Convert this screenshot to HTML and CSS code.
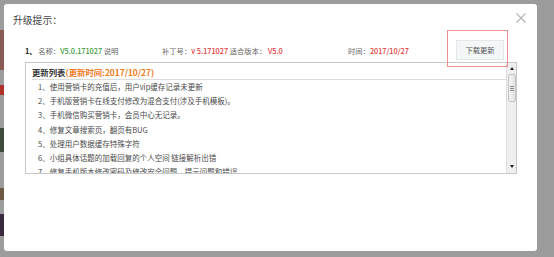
FILE: index.html
```html
<!DOCTYPE html>
<html lang="zh-CN">
<head>
<meta charset="utf-8">
<title>升级提示</title>
<link rel="stylesheet" href="styles.css">
</head>
<body>
<div class="stage">
  <div class="backdrop">
    <span class="bd bd1"></span>
    <span class="bd bd2"></span>
    <span class="bd bd3"></span>
    <span class="bd bd4"></span>
    <span class="bd bd5"></span>
  </div>
  <div class="dialog">
    <div class="dlg-head">
      <span class="dlg-title">升级提示：</span>
      <span class="dlg-close" aria-label="关闭">
        <svg width="10" height="10" viewBox="0 0 10 10"><path d="M0.5 0.5 L9.5 9.5 M9.5 0.5 L0.5 9.5" stroke="#b4b4b4" stroke-width="1.1" fill="none"/></svg>
      </span>
    </div>
    <div class="info-row">
      <span class="cell cell-name"><b class="idx">1、</b> <span class="lbl">名称：</span><span class="green">V5.0.171027</span> <span class="lbl">说明</span></span>
      <span class="cell cell-patch"><span class="lbl">补丁号：</span><span class="red">v 5.171027</span> <span class="lbl">适合版本：</span> <span class="red">V5.0</span></span>
      <span class="cell cell-time"><span class="lbl">时间：</span><span class="red">2017/10/27</span></span>
      <span class="btn-wrap">
        <span class="btn">下载更新</span>
        <span class="mark"></span>
      </span>
    </div>
    <div class="list-box">
      <div class="list-main">
        <div class="list-head"><span class="lh-title">更新列表</span><span class="lh-time">(更新时间:2017/10/27)</span></div>
        <ol class="items">
          <li>1、使用营销卡的充值后，用户vip缓存记录未更新</li>
          <li>2、手机版营销卡在线支付修改为混合支付(涉及手机模板)。</li>
          <li>3、手机微信购买营销卡，会员中心无记录。</li>
          <li>4、修复文章搜索页，翻页有BUG</li>
          <li>5、处理用户数据缓存特殊字符</li>
          <li>6、小组具体话题的加载回复的个人空间 链接解析出错</li>
          <li>7、修复手机版本修改密码及修改安全问题，提示问题和错误</li>
        </ol>
      </div>
      <div class="sbar">
        <span class="sb-up"></span>
        <span class="sb-thumb"><i></i><i></i><i></i></span>
        <span class="sb-space"></span>
        <span class="sb-down"></span>
      </div>
    </div>
  </div>
</div>
</body>
</html>
```
FILE: styles.css
```css
html, body {
  margin: 0;
  padding: 0;
}
body {
  width: 554px;
  height: 257px;
  overflow: hidden;
  background: #9c9c9c;
  font-family: "Noto Sans CJK SC", "Noto Sans", sans-serif;
}
.stage {
  position: relative;
  width: 554px;
  height: 257px;
  padding: 4px 0 0 4px;
  box-sizing: border-box;
}
.backdrop {
  position: absolute;
  left: 0;
  top: 0;
  width: 4px;
  height: 257px;
}
.bd {
  position: absolute;
  left: 0;
  width: 4px;
}
.bd1 { top: 30px; height: 40px; background: #8a5a55; }
.bd2 { top: 85px; height: 10px; background: #b0302a; }
.bd3 { top: 128px; height: 24px; background: #3e4a3a; }
.bd4 { top: 188px; height: 12px; background: #6e5a44; }
.bd5 { top: 214px; height: 22px; background: #3a2a40; }

.dialog {
  position: relative;
  width: 533px;
  height: 247px;
  background: #fff;
  border-radius: 3px;
  display: flex;
  flex-direction: column;
}
.dlg-head {
  height: 36px;
  display: flex;
  align-items: flex-start;
  justify-content: space-between;
  padding: 0 11px 0 9px;
}
.dlg-title {
  margin-top: 9px;
  font-size: 9.8px;
  line-height: 14px;
  color: #444;
}
.dlg-close {
  margin-top: 9px;
  width: 10px;
  height: 10px;
  display: flex;
}
.info-row {
  height: 20px;
  display: flex;
  align-items: center;
  padding-left: 21px;
  font-size: 7.3px;
  color: #666;
  white-space: nowrap;
}
.cell {
  display: block;
  white-space: pre;
  padding-top: 2px;
  line-height: 12px;
}
.cell-name { width: 137px; }
.cell-patch { width: 186px; }
.cell-time { width: 108px; }
.idx {
  color: #222;
  font-weight: bold;
}
.green { color: #3a9a3a; font-weight: 500; }
.red { color: #e23b3b; font-weight: 500; }
.btn-wrap {
  position: relative;
  display: flex;
}
.btn {
  width: 46px;
  height: 18px;
  border: 1px solid #e4e8e8;
  background: #f4f7f7;
  color: #555;
  font-size: 7.3px;
  display: flex;
  align-items: center;
  justify-content: center;
}
.mark {
  position: absolute;
  left: -9px;
  top: -10px;
  width: 59px;
  height: 35px;
  border: 1px solid #ee8e8e;
}
.list-box {
  margin: 2px 0 0 21px;
  width: 492px;
  height: 112px;
  box-sizing: border-box;
  border: 1px solid #c8c8c8;
  display: flex;
  overflow: hidden;
}
.list-main {
  flex: 1;
  overflow: hidden;
}
.list-head {
  margin-left: 6px;
  height: 17px;
  border-bottom: 1px solid #dcdcdc;
  display: flex;
  align-items: center;
  font-size: 8.4px;
  font-weight: bold;
  white-space: nowrap;
  padding-top: 1px;
  box-sizing: border-box;
}
.lh-title { color: #333; }
.lh-time { color: #f07a22; }
.items {
  list-style: none;
  margin: 0;
  padding: 0 0 0 12px;
  font-size: 7.5px;
  line-height: 14.2px;
  color: #4a4a4a;
  white-space: nowrap;
}
.sbar {
  width: 10px;
  background: #efefef;
  border-left: 1px solid #dedede;
  display: flex;
  flex-direction: column;
  align-items: center;
  padding: 4px 0 3px;
  box-sizing: border-box;
}
.sb-up {
  width: 0;
  height: 0;
  border-left: 2.5px solid transparent;
  border-right: 2.5px solid transparent;
  border-bottom: 3px solid #222;
}
.sb-thumb {
  margin-top: 4px;
  width: 8px;
  height: 28px;
  box-sizing: border-box;
  border: 1px solid #c4c4c4;
  border-radius: 2px;
  background: linear-gradient(to right, #f4f4f4, #e2e2e2);
  display: flex;
  flex-direction: column;
  align-items: center;
  justify-content: center;
  gap: 1px;
}
.sb-thumb i {
  width: 4px;
  height: 1px;
  background: #8a8a8a;
}
.sb-space { flex: 1; }
.sb-down {
  width: 0;
  height: 0;
  border-left: 2.5px solid transparent;
  border-right: 2.5px solid transparent;
  border-top: 3px solid #222;
  margin-bottom: 2px;
}
```
